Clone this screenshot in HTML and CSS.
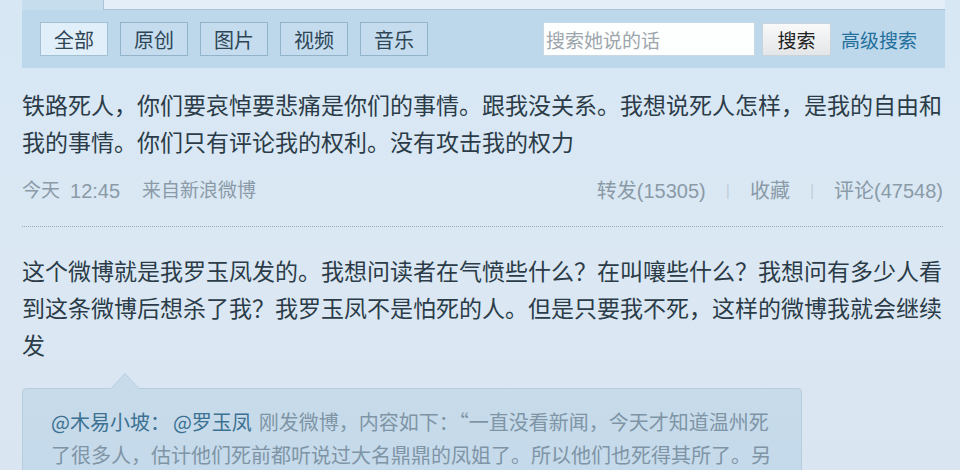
FILE: index.html
```html
<!DOCTYPE html>
<html lang="zh-CN">
<head>
    <meta charset="UTF-8">
    <title>她的微博</title>
    <link rel="stylesheet" href="styles.css">
</head>
<body>

    <div class="page">
        <!-- 顶部标签 -->
        <div class="tabs">
            <div class="tab active"></div>
            <div class="tab rest"></div>
        </div>

        <!-- 筛选栏 -->
        <div class="filter-bar">
            <div class="filters">
                <button class="filter current">全部</button>
                <button class="filter">原创</button>
                <button class="filter">图片</button>
                <button class="filter">视频</button>
                <button class="filter">音乐</button>
            </div>
            <div class="search">
                <input type="text" placeholder="搜索她说的话">
                <button class="search-btn">搜索</button>
                <a href="#" class="adv">高级搜索</a>
            </div>
        </div>

        <!-- 第一条 -->
        <div class="feed">
            <p class="text">铁路死人，你们要哀悼要悲痛是你们的事情。跟我没关系。我想说死人怎样，是我的自由和我的事情。你们只有评论我的权利。没有攻击我的权力</p>
            <div class="meta">
                <div class="info">
                    <span>今天</span>
                    <span class="time">12:45</span>
                    <span>来自新浪微博</span>
                </div>
                <div class="actions">
                    <a href="#">转发(15305)</a>
                    <span class="sep">|</span>
                    <a href="#">收藏</a>
                    <span class="sep">|</span>
                    <a href="#">评论(47548)</a>
                </div>
            </div>
        </div>

        <!-- 第二条 -->
        <div class="feed second">
            <p class="text">这个微博就是我罗玉凤发的。我想问读者在气愤些什么？在叫嚷些什么？我想问有多少人看到这条微博后想杀了我？我罗玉凤不是怕死的人。但是只要我不死，这样的微博我就会继续发</p>
            <div class="quote">
                <p><a href="#">@木易小坡：</a><a href="#">@罗玉凤</a>刚发微博，内容如下：“一直没看新闻，今天才知道温州死<br>了很多人，估计他们死前都听说过大名鼎鼎的凤姐了。所以他们也死得其所了。另</p>
            </div>
        </div>
    </div>

</body>
</html>
```

FILE: styles.css
```css
/* 页面 */
html, body {
    margin: 0;
    padding: 0;
    height: 100%;
    overflow: hidden;
}

body {
    background: linear-gradient(#d7e7f4, #dbe8f4 60%, #d9e6f2);
    font-family: "Noto Sans CJK SC", "Liberation Sans", sans-serif;
    color: #2b3c48;
}

.page {
    width: 923px;
    margin-left: 22px;
}

/* 顶部标签 */
.tabs {
    display: flex;
    height: 10px;
}

.tab.active {
    width: 81px;
    background-color: #c6ddee;
}

.tab.rest {
    flex: 1;
    background-color: #e3eef8;
    border-left: 1px solid #a9c3d8;
    border-bottom: 1px solid #a9c3d8;
    box-sizing: border-box;
}

/* 筛选栏 */
.filter-bar {
    display: flex;
    align-items: center;
    justify-content: space-between;
    height: 58px;
    padding: 0 28px 0 18px;
    background-color: #bdd7eb;
}

.filters {
    display: flex;
    gap: 12px;
}

.filter {
    width: 68px;
    height: 34px;
    padding: 0;
    border: 1px solid #93b3ca;
    background-color: #c4dcee;
    color: #2f4656;
    font-family: inherit;
    font-size: 20px;
}

.filter.current {
    background-color: #e0eff9;
    border-color: #a2bfd3;
}

.search {
    display: flex;
    align-items: center;
}

.search input {
    width: 212px;
    height: 34px;
    box-sizing: border-box;
    border: 1px solid #c8d8e4;
    padding: 0 2px;
    font-family: inherit;
    font-size: 19px;
    background-color: #fdfefe;
}

.search input::placeholder {
    color: #9ea6ad;
}

.search-btn {
    width: 69px;
    height: 33px;
    margin-left: 7px;
    padding: 0;
    border: 1px solid #c9d3db;
    border-radius: 2px;
    background: linear-gradient(#f9f9f9, #e3e6e8);
    color: #222;
    font-family: inherit;
    font-size: 19px;
}

.adv {
    margin-left: 10px;
    color: #24709d;
    text-decoration: none;
    font-size: 19px;
}

/* 微博内容 */
.feed {
    width: 921px;
    padding-top: 18px;
}

.text {
    margin: 0;
    font-size: 23px;
    line-height: 37px;
}

.meta {
    display: flex;
    justify-content: space-between;
    margin-top: 19px;
    padding-bottom: 23px;
    border-bottom: 1px dotted #98a9b7;
    font-family: "Liberation Sans", "Noto Sans CJK SC", sans-serif;
    font-size: 19px;
    line-height: 24px;
    color: #8a9aa7;
}

.info {
    display: flex;
    gap: 10px;
}

.info .time {
    margin-right: 12px;
    font-size: 20px;
}

.actions {
    display: flex;
    gap: 20px;
    font-size: 20px;
}

.actions a {
    color: #8a9aa7;
    text-decoration: none;
}

.sep {
    color: #c2cfd9;
    font-size: 16px;
}

.feed.second {
    padding-top: 25px;
}

/* 引用框 */
.quote {
    position: relative;
    width: 780px;
    margin-top: 25px;
    height: 100px;
    box-sizing: border-box;
    padding: 16px 28px 0;
    background: linear-gradient(#c7dbea, #c4d9ea);
    border: 1px solid #b6cde0;
    border-radius: 4px;
}

.quote::before,
.quote::after {
    content: "";
    position: absolute;
    left: 87px;
    top: -16px;
    border: 15px solid transparent;
    border-top: 0;
    border-bottom: 16px solid #b6cde0;
}

.quote::after {
    top: -15px;
    border-bottom-color: #c7dbea;
}

.quote p {
    margin: 0;
    font-size: 20px;
    line-height: 33px;
    color: #7f95a6;
    white-space: nowrap;
}

.quote a {
    margin-right: 3px;
    color: #3c7192;
    text-decoration: none;
}

.quote a + a {
    margin-right: 7px;
}
```
